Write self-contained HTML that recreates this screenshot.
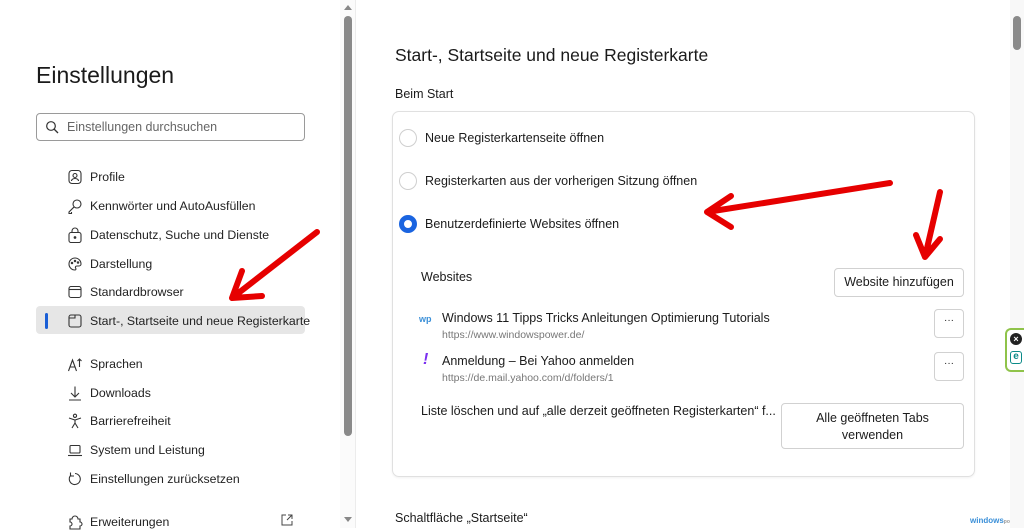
<!DOCTYPE html>
<html><head><meta charset="utf-8"><style>
*{margin:0;padding:0;box-sizing:border-box}
body{width:1024px;height:528px;overflow:hidden;background:#fff;font-family:"Liberation Sans",sans-serif;color:#1b1b1b;position:relative}
.a{position:absolute;white-space:nowrap}
.nav{font-size:12.3px;color:#222}
.ic{position:absolute;left:67px}
.btn{position:absolute;border:1px solid #d1d1d1;border-radius:4px;background:#fff;font-size:12.5px;text-align:center}
.radio{position:absolute;width:18px;height:18px;border-radius:50%;border:1px solid #cfcfcf;background:#fff}
</style></head><body>
<div class="a" style="left:36px;top:62px;font-size:23px;color:#1a1a1a">Einstellungen</div>
<div class="a" style="left:36px;top:113px;width:269px;height:28px;border:1px solid #9a9a9a;border-radius:4px"></div>
<svg class="a" style="left:45px;top:120px" width="14" height="14" viewBox="0 0 14 14"><circle cx="6" cy="6" r="4.3" fill="none" stroke="#333" stroke-width="1.2"/><path d="M9 9l4 4" stroke="#333" stroke-width="1.3"/></svg>
<div class="a" style="left:67px;top:120px;font-size:12.5px;color:#666">Einstellungen durchsuchen</div>

<div class="a" style="left:36px;top:306px;width:269px;height:28px;background:#e6e6e6;border-radius:4px"></div>
<div class="a" style="left:45px;top:313px;width:3px;height:16px;background:#1a5fd6;border-radius:2px"></div>

<svg class="a ic" style="top:169px" width="16" height="16" viewBox="0 0 16 16" fill="none" stroke="#333" stroke-width="1.1"><rect x="2" y="1.5" width="12" height="13" rx="3"/><circle cx="8" cy="6.5" r="2"/><path d="M4.5 12a3.5 2.5 0 017 0"/></svg>
<svg class="a ic" style="top:198px" width="16" height="16" viewBox="0 0 16 16" fill="none" stroke="#333" stroke-width="1.1"><circle cx="10" cy="6" r="4"/><path d="M7.2 8.8L2 14v1.5h2.5V14"/></svg>
<svg class="a ic" style="top:227px" width="16" height="16" viewBox="0 0 16 16" fill="none" stroke="#333" stroke-width="1.1"><rect x="2" y="5.5" width="12" height="10" rx="2"/><path d="M5 5.5V4a3 3 0 016 0v1.5"/><circle cx="8" cy="10.5" r=".8" fill="#333"/></svg>
<svg class="a ic" style="top:256px" width="16" height="16" viewBox="0 0 16 16" fill="none" stroke="#333" stroke-width="1.1"><path d="M8 2a6 6 0 100 12c1 0 1.2-1 .6-2s0-2 1.4-2h2a2 2 0 002-2 6 6 0 00-6-6z"/><circle cx="5" cy="7" r=".7"/><circle cx="8" cy="5" r=".7"/><circle cx="11" cy="6.5" r=".7"/></svg>
<svg class="a ic" style="top:284px" width="16" height="16" viewBox="0 0 16 16" fill="none" stroke="#333" stroke-width="1.1"><rect x="2" y="2.5" width="12" height="11" rx="2"/><path d="M2 5.5h12"/></svg>
<svg class="a ic" style="top:313px" width="16" height="16" viewBox="0 0 16 16" fill="none" stroke="#333" stroke-width="1.1"><rect x="2" y="2" width="12" height="12" rx="2"/><path d="M2 5h6V2"/></svg>
<svg class="a ic" style="top:356px" width="16" height="16" viewBox="0 0 16 16" fill="none" stroke="#333" stroke-width="1.1"><path d="M1.5 15l4-11 4 11M3 11h5M12.5 3v8M10.5 5l2-2 2 2"/></svg>
<svg class="a ic" style="top:385px" width="16" height="16" viewBox="0 0 16 16" fill="none" stroke="#333" stroke-width="1.1"><path d="M8 1.5v10M4 8l4 4 4-4M2 15h12"/></svg>
<svg class="a ic" style="top:413px" width="16" height="16" viewBox="0 0 16 16" fill="none" stroke="#333" stroke-width="1.1"><circle cx="8" cy="2.8" r="1.6"/><path d="M2 5l6 2 6-2M8 7v3l-3 5M8 10l3 5"/></svg>
<svg class="a ic" style="top:442px" width="16" height="16" viewBox="0 0 16 16" fill="none" stroke="#333" stroke-width="1.1"><rect x="3" y="3.5" width="10" height="7.5" rx="1"/><path d="M1 13.5h14"/></svg>
<svg class="a ic" style="top:471px" width="16" height="16" viewBox="0 0 16 16" fill="none" stroke="#333" stroke-width="1.1"><path d="M4 4a5.5 5.5 0 104-1.5M3.5 1.5V5h3.5"/></svg>
<svg class="a ic" style="top:514px" width="16" height="16" viewBox="0 0 16 16" fill="none" stroke="#333" stroke-width="1.1"><path d="M5 5a3 3 0 016 0h2v3a2 2 0 010 4v3H3v-3a2 2 0 000-4V5z"/></svg>

<div class="a nav" style="left:90px;top:170px">Profile</div>
<div class="a nav" style="left:90px;top:199px">Kennwörter und AutoAusfüllen</div>
<div class="a nav" style="left:90px;top:228px">Datenschutz, Suche und Dienste</div>
<div class="a nav" style="left:90px;top:257px">Darstellung</div>
<div class="a nav" style="left:90px;top:285px">Standardbrowser</div>
<div class="a nav" style="left:90px;top:314px">Start-, Startseite und neue Registerkarte</div>
<div class="a nav" style="left:90px;top:357px">Sprachen</div>
<div class="a nav" style="left:90px;top:386px">Downloads</div>
<div class="a nav" style="left:90px;top:414px">Barrierefreiheit</div>
<div class="a nav" style="left:90px;top:443px">System und Leistung</div>
<div class="a nav" style="left:90px;top:472px">Einstellungen zurücksetzen</div>
<div class="a nav" style="left:90px;top:515px">Erweiterungen</div>
<svg class="a" style="left:280px;top:513px" width="14" height="14" viewBox="0 0 14 14" fill="none" stroke="#444"><path d="M6 2H2v10h10V8M8 2h4v4M12 2L7 7"/></svg>

<div class="a" style="left:340px;top:0;width:16px;height:528px;background:#fbfbfb;border-right:1px solid #ececec"></div>
<div class="a" style="left:344px;top:16px;width:8px;height:420px;background:#8a8a8a;border-radius:4px"></div>
<div class="a" style="left:344px;top:5px;width:0;height:0;border:4px solid transparent;border-bottom:5px solid #888;border-top:0"></div>
<div class="a" style="left:344px;top:517px;width:0;height:0;border:4px solid transparent;border-top:5px solid #888;border-bottom:0"></div>

<div class="a" style="left:395px;top:45px;font-size:17.5px;color:#1a1a1a">Start-, Startseite und neue Registerkarte</div>
<div class="a" style="left:395px;top:87px;font-size:12.5px">Beim Start</div>
<div class="a" style="left:392px;top:111px;width:583px;height:366px;border:1px solid #e0e0e0;border-radius:7px;box-shadow:0 1px 2px rgba(0,0,0,.06)"></div>
<div class="radio" style="left:399px;top:129px"></div>
<div class="a" style="left:425px;top:131px;font-size:12.5px">Neue Registerkartenseite öffnen</div>
<div class="radio" style="left:399px;top:172px"></div>
<div class="a" style="left:425px;top:174px;font-size:12.5px">Registerkarten aus der vorherigen Sitzung öffnen</div>
<div class="radio" style="left:399px;top:215px;border:5px solid #1a64e0"></div>
<div class="a" style="left:425px;top:217px;font-size:12.5px">Benutzerdefinierte Websites öffnen</div>

<div class="a" style="left:421px;top:270px;font-size:12.5px">Websites</div>
<div class="btn" style="left:834px;top:268px;width:130px;height:29px;line-height:27px">Website hinzufügen</div>
<div class="a" style="left:419px;top:314px;font-size:9px;color:#3a8fd8;font-weight:bold">wp</div>
<div class="a" style="left:442px;top:311px;font-size:12.5px">Windows 11 Tipps Tricks Anleitungen Optimierung Tutorials</div>
<div class="a" style="left:442px;top:329px;font-size:10.5px;color:#777">https://www.windowspower.de/</div>
<div class="btn" style="left:934px;top:309px;width:30px;height:29px;line-height:22px;font-size:10px">···</div>
<div class="a" style="left:423px;top:351px;font-size:16px;color:#7b2ff0;font-style:italic;font-weight:bold">!</div>
<div class="a" style="left:442px;top:354px;font-size:12.5px">Anmeldung – Bei Yahoo anmelden</div>
<div class="a" style="left:442px;top:372px;font-size:10.5px;color:#777">https://de.mail.yahoo.com/d/folders/1</div>
<div class="btn" style="left:934px;top:352px;width:30px;height:29px;line-height:22px;font-size:10px">···</div>
<div class="a" style="left:421px;top:404px;font-size:12.5px">Liste löschen und auf „alle derzeit geöffneten Registerkarten“ f...</div>
<div class="btn" style="left:781px;top:403px;width:183px;height:46px;padding-top:6px;line-height:17px">Alle geöffneten Tabs<br>verwenden</div>

<div class="a" style="left:395px;top:511px;font-size:12.5px">Schaltfläche „Startseite“</div>
<div class="a" style="left:970px;top:516px;font-size:8px;color:#3a8fd8;font-weight:bold">windows<span style="font-size:5px;color:#999">power</span></div>

<div class="a" style="left:1010px;top:0;width:14px;height:528px;background:#f8f8f8"></div>
<div class="a" style="left:1013px;top:16px;width:8px;height:34px;background:#8a8a8a;border-radius:4px"></div>
<div class="a" style="left:1005px;top:328px;width:19px;height:44px;border:2px solid #8fc34a;border-right:0;border-radius:6px 0 0 6px;background:#fff"></div>
<div class="a" style="left:1010px;top:333px;width:12px;height:12px;border-radius:50%;background:#222;color:#fff;font-size:9px;line-height:12px;text-align:center;font-weight:bold">×</div>
<div class="a" style="left:1010px;top:351px;width:12px;height:13px;border-radius:3px;border:1.5px solid #0a8a88;color:#0a8a88;font-size:10px;line-height:10px;text-align:center;font-weight:bold">e</div>

<svg class="a" style="left:0;top:0" width="1024" height="528" fill="none" stroke="#e60000" stroke-width="6" stroke-linecap="round" stroke-linejoin="round">
<path d="M317 232L232 298M232 298l10-27M232 298l30-2"/>
<path d="M890 183L707 212M707 212l24-16M707 212l24 15"/>
<path d="M940 192L925 257M925 257l-9-22M925 257l15-18"/>
</svg>
</body></html>
